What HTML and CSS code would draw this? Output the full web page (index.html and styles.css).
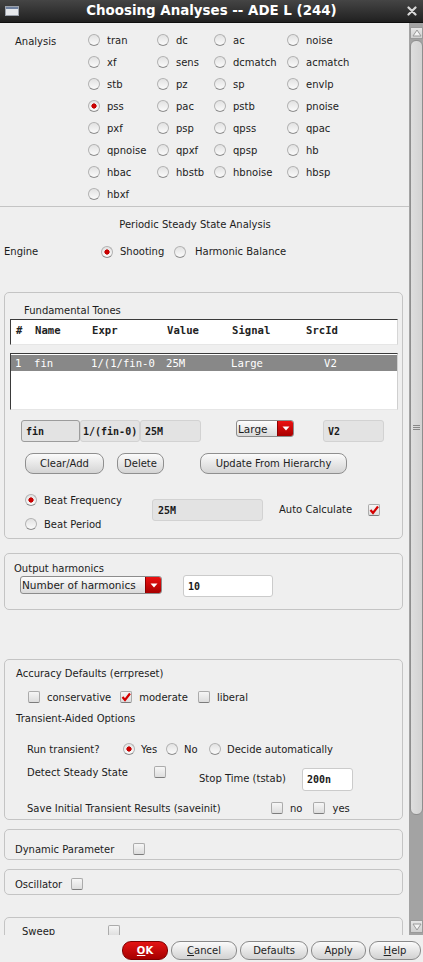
FILE: index.html
```html
<!DOCTYPE html>
<html>
<head>
<meta charset="utf-8">
<title>Choosing Analyses -- ADE L (244)</title>
<link rel="stylesheet" href="styles.css">
</head>
<body>
<div class="window">
  <div class="titlebar">
    <div class="tb-left">
      <svg class="winicon" width="14" height="10" viewBox="0 0 14 10"><rect x="0.5" y="0.5" width="13" height="9" fill="#e6e8ec" stroke="#9aa0aa"/><rect x="1" y="1" width="12" height="2" fill="#6d7f9e"/></svg>
    </div>
    <div class="title">Choosing Analyses -- ADE L (244)</div>
    <div class="tb-right">
      <svg class="close" width="10" height="10" viewBox="0 0 10 10"><path d="M1.5 1.5 L8.5 8.5 M8.5 1.5 L1.5 8.5" stroke="#d8d8d8" stroke-width="2.2" stroke-linecap="round"/></svg>
    </div>
  </div>

  <div class="main">
    <div class="content">
      <section class="analysis">
        <div class="analysis-label">Analysis</div>
        <div class="radio-grid">
          <div class="radio"><span class="rb"></span>tran</div>
          <div class="radio"><span class="rb"></span>dc</div>
          <div class="radio"><span class="rb"></span>ac</div>
          <div class="radio"><span class="rb"></span>noise</div>
          <div class="radio"><span class="rb"></span>xf</div>
          <div class="radio"><span class="rb"></span>sens</div>
          <div class="radio"><span class="rb"></span>dcmatch</div>
          <div class="radio"><span class="rb"></span>acmatch</div>
          <div class="radio"><span class="rb"></span>stb</div>
          <div class="radio"><span class="rb"></span>pz</div>
          <div class="radio"><span class="rb"></span>sp</div>
          <div class="radio"><span class="rb"></span>envlp</div>
          <div class="radio"><span class="rb on"></span>pss</div>
          <div class="radio"><span class="rb"></span>pac</div>
          <div class="radio"><span class="rb"></span>pstb</div>
          <div class="radio"><span class="rb"></span>pnoise</div>
          <div class="radio"><span class="rb"></span>pxf</div>
          <div class="radio"><span class="rb"></span>psp</div>
          <div class="radio"><span class="rb"></span>qpss</div>
          <div class="radio"><span class="rb"></span>qpac</div>
          <div class="radio"><span class="rb"></span>qpnoise</div>
          <div class="radio"><span class="rb"></span>qpxf</div>
          <div class="radio"><span class="rb"></span>qpsp</div>
          <div class="radio"><span class="rb"></span>hb</div>
          <div class="radio"><span class="rb"></span>hbac</div>
          <div class="radio"><span class="rb"></span>hbstb</div>
          <div class="radio"><span class="rb"></span>hbnoise</div>
          <div class="radio"><span class="rb"></span>hbsp</div>
          <div class="radio"><span class="rb"></span>hbxf</div>
        </div>
      </section>

      <div class="pss-title">Periodic Steady State Analysis</div>

      <div class="engine">
        <div class="engine-label">Engine</div>
        <div class="radio r-shoot"><span class="rb on"></span>Shooting</div>
        <div class="radio r-hb"><span class="rb"></span>Harmonic Balance</div>
      </div>

      <div class="group tones">
        <div class="gtitle tones-title">Fundamental Tones</div>
        <div class="tbl-head">
          <span>#</span><span>Name</span><span>Expr</span><span>Value</span><span>Signal</span><span>SrcId</span>
        </div>
        <div class="tbl-list">
          <div class="tbl-row sel">
            <span>1</span><span>fin</span><span>1/(1/fin-0</span><span>25M</span><span>Large</span><span class="srcid">V2</span>
          </div>
        </div>
        <div class="fields">
          <div class="field f-name focus">fin</div>
          <div class="field f-expr">1/(fin-0)</div>
          <div class="field f-val">25M</div>
          <div class="combo c-large"><span class="combo-text">Large</span><span class="combo-arrow"><svg width="8" height="5" viewBox="0 0 8 5"><path d="M0.5 0.5 L7.5 0.5 L4 4.5 Z" fill="#fff"/></svg></span></div>
          <div class="field f-src">V2</div>
        </div>
        <div class="btnrow">
          <div class="btn b-clear">Clear/Add</div>
          <div class="btn b-delete">Delete</div>
          <div class="btn b-update">Update From Hierarchy</div>
        </div>
        <div class="beat">
          <div class="beat-radios">
            <div class="radio beat-r"><span class="rb on"></span>Beat Frequency</div>
            <div class="radio beat-r"><span class="rb"></span>Beat Period</div>
          </div>
          <div class="field f-beat">25M</div>
          <div class="autocalc">Auto Calculate</div>
          <span class="cb on ac-cb"><svg width="10" height="10" viewBox="0 0 10 10"><path d="M1.5 5 L4 8 L9 1.5" fill="none" stroke="#d40000" stroke-width="2.2"/></svg></span>
        </div>
      </div>

      <div class="group output">
        <div class="gtitle out-title">Output harmonics</div>
        <div class="out-row">
          <div class="combo c-harm"><span class="combo-text">Number of harmonics</span><span class="combo-arrow"><svg width="8" height="5" viewBox="0 0 8 5"><path d="M0.5 0.5 L7.5 0.5 L4 4.5 Z" fill="#fff"/></svg></span></div>
          <div class="field white f-harm">10</div>
        </div>
      </div>

      <div class="group accuracy">
        <div class="gtitle acc-title">Accuracy Defaults (errpreset)</div>
        <div class="chk-row">
          <span class="cb"></span><span class="chk-text t-cons">conservative</span>
          <span class="cb on"><svg width="10" height="10" viewBox="0 0 10 10"><path d="M1.5 5 L4 8 L9 1.5" fill="none" stroke="#d40000" stroke-width="2.2"/></svg></span><span class="chk-text t-mod">moderate</span>
          <span class="cb"></span><span class="chk-text">liberal</span>
        </div>
        <div class="gtitle trans-title">Transient-Aided Options</div>
        <div class="run-row">
          <span class="run-label">Run transient?</span>
          <div class="radio r-yes"><span class="rb on"></span>Yes</div>
          <div class="radio r-no"><span class="rb"></span>No</div>
          <div class="radio r-auto"><span class="rb"></span>Decide automatically</div>
        </div>
        <div class="detect-row">
          <span class="detect-label">Detect Steady State</span>
          <span class="cb detect-cb"></span>
          <span class="stop-label">Stop Time (tstab)</span>
          <div class="field white f-stop">200n</div>
        </div>
        <div class="save-row">
          <span class="save-label">Save Initial Transient Results (saveinit)</span>
          <span class="cb"></span><span class="chk-text t-no">no</span>
          <span class="cb"></span><span class="chk-text">yes</span>
        </div>
      </div>

      <div class="group single dyn">
        <div class="single-row"><span class="s-label dyn-label">Dynamic Parameter</span><span class="cb"></span></div>
      </div>

      <div class="group single osc">
        <div class="single-row"><span class="s-label osc-label">Oscillator</span><span class="cb"></span></div>
      </div>

      <div class="group single sweep">
        <div class="single-row"><span class="s-label sweep-label">Sweep</span><span class="cb"></span></div>
      </div>
    </div>

    <div class="scrollbar">
      <div class="sb-btn sb-up"><svg width="10" height="8" viewBox="0 0 10 8"><path d="M1 7 L5 1 L9 7 Z" fill="#f4f4f4" stroke="#9a9a9a"/></svg></div>
      <div class="sb-thumb"><span class="grip"></span></div>
      <div class="sb-space"></div>
      <div class="sb-btn sb-down"><svg width="10" height="8" viewBox="0 0 10 8"><path d="M1 1 L5 7 L9 1 Z" fill="#f4f4f4" stroke="#9a9a9a"/></svg></div>
    </div>
  </div>

  <div class="footer">
    <div class="fbtn ok"><u>O</u>K</div>
    <div class="fbtn cancel"><u>C</u>ancel</div>
    <div class="fbtn defaults">Defaults</div>
    <div class="fbtn apply">Apply</div>
    <div class="fbtn help"><u>H</u>elp</div>
  </div>
</div>
</body>
</html>
```

FILE: styles.css
```css
* { box-sizing: border-box; margin: 0; padding: 0; }
html, body { width: 423px; height: 962px; overflow: hidden; }
body {
  font-family: "DejaVu Sans", "Noto Sans", sans-serif;
  font-size: 10px;
  color: #1c1c1c;
  background: #efefef;
}
.window { display: flex; flex-direction: column; height: 962px; }

/* title bar */
.titlebar {
  height: 23px; flex: none;
  display: grid; grid-template-columns: 1fr auto 1fr; align-items: center;
  background: linear-gradient(#454545, #202020);
  border-bottom: 1px solid #0f0f0f;
}
.tb-left { display: flex; padding-left: 5px; }
.tb-right { display: flex; justify-content: flex-end; padding-right: 6px; }
.title { color: #fff; font-weight: bold; font-size: 13.4px; line-height: 22px; }

/* main scroll area */
.main { flex: none; height: 912px; display: flex; overflow: hidden; }
.content { width: 409px; flex: none; }

/* analysis radio grid */
.analysis { display: flex; padding-top: 6px; padding-bottom: 1px; border-bottom: 1px solid #c4c4c4; }
.analysis-label { width: 88px; flex: none; padding-left: 15px; line-height: 22px; padding-top: 2px; }
.radio-grid { display: grid; grid-template-columns: 69px 57px 73px 1fr; grid-auto-rows: 22px; }
.radio { display: flex; align-items: center; gap: 7px; white-space: nowrap; }
.rb {
  width: 12px; height: 12px; flex: none; border-radius: 50%;
  border: 1px solid #b2b2b2; border-bottom-color: #8e8e8e;
  background: linear-gradient(#e2e2e2, #fbfbfb);
}
.rb.on {
  background: radial-gradient(circle at 50% 50%, #d60000 0, #c00000 2.3px, transparent 2.9px), linear-gradient(#e2e2e2, #fbfbfb);
}
.cb {
  width: 12px; height: 12px; flex: none; border-radius: 2px;
  border: 1px solid #ababab; border-bottom-color: #7c7c7c;
  background: linear-gradient(#f6f6f6, #dddddd);
  display: inline-flex; align-items: center; justify-content: center;
}

.pss-title { margin-top: 11px; line-height: 14px; text-align: center; padding-right: 19px; }
.engine { display: flex; align-items: center; height: 20px; margin-top: 9px; padding-top: 1px; }
.engine-label { width: 101px; padding-left: 4px; flex: none; }
.r-shoot { gap: 7px; width: 73px; }
.r-hb { gap: 9px; }

/* groups */
.group {
  margin-left: 4px; width: 399px;
  border: 1px solid #c4c4c4; border-radius: 5px;
}
.gtitle { line-height: 14px; white-space: nowrap; }
.tones { margin-top: 31px; padding-bottom: 2px; }
.tones-title { margin-top: 11px; margin-left: 19px; }

.tbl-head, .tbl-row {
  display: grid; grid-template-columns: 19px 57px 75px 65px 74px 1fr;
  font-family: "DejaVu Sans Mono", monospace; font-size: 10.6px; white-space: nowrap;
}
.tbl-head {
  margin: 1px 4px 0 5px; height: 26px; padding: 2px 0 0 5px; line-height: 16px;
  background: #fff; font-weight: bold; color: #222;
  border-top: 1px solid #3a3a3a; border-left: 1px solid #3a3a3a;
  border-right: 1px solid #d6d6d6; border-bottom: 1px solid #e6e6e6;
}
.tbl-list {
  margin: 8px 4px 0 5px; height: 57px; padding-top: 1px;
  background: #fff;
  border-top: 1px solid #3a3a3a; border-left: 1px solid #3a3a3a;
  border-right: 1px solid #cfcfcf; border-bottom: 1px solid #e6e6e6;
}
.tbl-row { height: 16px; line-height: 16px; padding-left: 4px; }
.tbl-row.sel { background: #888888; color: #fff; }
.srcid { padding-left: 19px; }

.fields { display: flex; align-items: flex-start; margin-top: 10px; padding-left: 16px; height: 22px; }
.field {
  height: 22px; line-height: 21px; padding-left: 4px;
  font-family: "DejaVu Sans Mono", monospace; font-size: 10px; font-weight: bold; color: #1a1a1a;
  background: #e3e3e3; border: 1px solid #d2d2d2; border-radius: 3px; white-space: nowrap; overflow: hidden;
}
.field.focus { border-color: #9c9c9c; }
.field.white { background: #fff; border-color: #cbcbcb; }
.f-name { width: 59px; }
.f-expr { width: 60px; padding-left: 2px; }
.f-val { width: 61px; }
.f-src { width: 61px; margin-left: 29px; }
.combo {
  display: flex; height: 18px; border: 1px solid #8c8c8c; border-radius: 3px; overflow: hidden;
  background: linear-gradient(#fdfdfd, #dadada);
}
.combo-text { flex: 1; line-height: 16px; padding-left: 1px; font-size: 10.5px; white-space: nowrap; }
.combo-arrow {
  width: 16px; flex: none; display: flex; align-items: center; justify-content: center;
  background: linear-gradient(#ec1010, #a80000); border-left: 1px solid #8a0000;
}
.c-large { width: 58px; margin-left: 35px; height: 17px; }

.btnrow { display: flex; margin-top: 11px; padding-left: 20px; height: 21px; }
.btn {
  height: 21px; line-height: 20px; text-align: center; white-space: nowrap;
  border: 1px solid #8f8f8f; border-radius: 8px;
  background: linear-gradient(#fbfbfb, #d4d4d4); color: #1e1e1e;
}
.b-clear { width: 79px; }
.b-delete { width: 47px; margin-left: 13px; }
.b-update { width: 147px; margin-left: 36px; }

.beat { display: flex; align-items: flex-start; margin-top: 13px; padding-left: 20px; }
.beat-radios { width: 127px; flex: none; padding-top: 1px; }
.beat-r { height: 24px; gap: 7px; }
.f-beat { width: 111px; margin-top: 12px; padding-left: 5px; }
.autocalc { margin-left: 16px; margin-top: 16px; line-height: 14px; width: 89px; white-space: nowrap; }
.ac-cb { margin-top: 17px; }

.output { margin-top: 14px; padding-bottom: 12px; }
.out-title { margin-top: 8px; margin-left: 9px; }
.out-row { display: flex; align-items: flex-start; height: 22px; margin-top: -1px; padding-left: 15px; }
.c-harm { width: 142px; margin-top: 1px; }
.f-harm { width: 90px; margin-left: 21px; padding-left: 4px; }

.accuracy { margin-top: 49px; padding-bottom: 1px; }
.acc-title { margin-top: 7px; margin-left: 11px; }
.chk-row { display: flex; align-items: center; height: 20px; margin-top: 6px; padding-left: 23px; }
.chk-text { margin-left: 7px; white-space: nowrap; }
.t-cons { margin-right: 9px; }
.t-mod { margin-right: 10px; }
.trans-title { margin-top: 5px; margin-left: 11px; }
.run-row { display: flex; align-items: center; height: 20px; margin-top: 13px; padding-left: 22px; }
.run-label { width: 96px; flex: none; }
.run-row .radio { gap: 6px; }
.r-yes { width: 43px; }
.r-no { width: 43px; }
.detect-row { display: flex; align-items: flex-start; height: 28px; margin-top: 6px; padding-left: 22px; }
.detect-label { width: 127px; flex: none; line-height: 14px; margin-top: 1px; }
.detect-cb { margin-top: 1px; }
.stop-label { margin-left: 33px; width: 103px; flex: none; line-height: 14px; margin-top: 7px; white-space: nowrap; }
.f-stop { width: 51px; height: 23px; margin-top: 3px; padding-left: 4px; line-height: 22px; }
.save-row { display: flex; align-items: center; height: 20px; margin-top: 5px; padding-left: 22px; }
.save-label { width: 244px; flex: none; white-space: nowrap; }
.t-no { margin-right: 11px; }

.single { margin-top: 9px; }
.single-row { display: flex; align-items: center; height: 16px; }
.dyn { padding-top: 11px; padding-bottom: 2px; }
.osc { padding-top: 6px; padding-bottom: 2px; }
.sweep { margin-top: 22px; padding-top: 5px; padding-bottom: 2px; }
.s-label { white-space: nowrap; flex: none; }
.dyn-label { width: 128px; padding-left: 10px; }
.osc-label { width: 66px; padding-left: 10px; }
.sweep-label { width: 103px; padding-left: 17px; }

/* scrollbar */
.scrollbar {
  width: 14px; flex: none; display: flex; flex-direction: column;
  background: #a3a3a3; padding-top: 4px; padding-bottom: 2px;
}
.sb-btn {
  height: 12px; margin-left: 1px; display: flex; align-items: center; justify-content: center;
  background: linear-gradient(#e6e6e6, #cfcfcf); border: 1px solid #9a9a9a;
}
.sb-down { height: 13px; }
.sb-thumb {
  height: 775px; margin: 1px 0 0 1px;
  background: linear-gradient(90deg, #dedede, #d2d2d2);
  border: 1px solid #8e8e8e; border-radius: 6px;
  display: flex; align-items: center; justify-content: center;
}
.grip { width: 7px; height: 5px; border-top: 1px solid #888; border-bottom: 1px solid #888; background: linear-gradient(transparent 1px, #888 1px, #888 2px, transparent 2px); }
.sb-space { flex: 1; }

/* footer */
.footer {
  flex: none; height: 27px; display: flex; justify-content: flex-end;
  gap: 3px; padding: 6px 2px 0 0;
}
.fbtn {
  height: 19px; line-height: 18px; text-align: center; white-space: nowrap;
  border: 1px solid #8a8a8a; border-radius: 9px;
  background: linear-gradient(#fbfbfb, #d2d2d2); color: #1e1e1e;
}
.fbtn u { text-underline-offset: 1px; }
.ok { width: 46px; background: linear-gradient(#e41414, #a60000); border-color: #7e0000; color: #fff; font-weight: bold; }
.cancel { width: 66px; }
.defaults { width: 68px; }
.apply { width: 55px; }
.help { width: 52px; }
```
